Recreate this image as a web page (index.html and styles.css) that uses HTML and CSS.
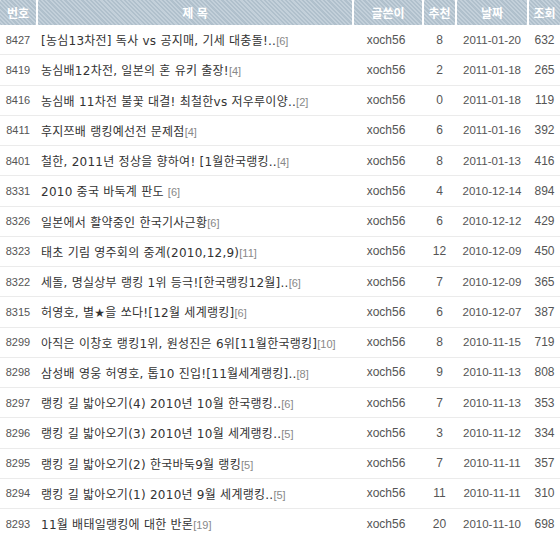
FILE: index.html
```html
<!DOCTYPE html>
<html lang="ko">
<head>
<meta charset="utf-8">
<link rel="stylesheet" href="styles.css">
</head>
<body>
<div class="board">
  <div class="head">
    <div class="hc c-no">번호</div>
    <div class="hc c-title">제 목</div>
    <div class="hc c-author">글쓴이</div>
    <div class="hc c-rec">추천</div>
    <div class="hc c-date">날짜</div>
    <div class="hc c-view">조회</div>
  </div>
  <ul class="rows">
    <li class="row"><span class="c-no">8427</span><span class="c-title">[농심13차전] 독사 vs 공지매, 기세 대충돌!..<em>[6]</em></span><span class="c-author">xoch56</span><span class="c-rec">8</span><span class="c-date">2011-01-20</span><span class="c-view">632</span></li>
    <li class="row"><span class="c-no">8419</span><span class="c-title">농심배12차전, 일본의 혼 유키 출장!<em>[4]</em></span><span class="c-author">xoch56</span><span class="c-rec">2</span><span class="c-date">2011-01-18</span><span class="c-view">265</span></li>
    <li class="row"><span class="c-no">8416</span><span class="c-title">농심배 11차전 불꽃 대결! 최철한vs 저우루이양..<em>[2]</em></span><span class="c-author">xoch56</span><span class="c-rec">0</span><span class="c-date">2011-01-18</span><span class="c-view">119</span></li>
    <li class="row"><span class="c-no">8411</span><span class="c-title">후지쯔배 랭킹예선전 문제점<em>[4]</em></span><span class="c-author">xoch56</span><span class="c-rec">6</span><span class="c-date">2011-01-16</span><span class="c-view">392</span></li>
    <li class="row"><span class="c-no">8401</span><span class="c-title">철한, 2011년 정상을 향하여! [1월한국랭킹..<em>[4]</em></span><span class="c-author">xoch56</span><span class="c-rec">8</span><span class="c-date">2011-01-13</span><span class="c-view">416</span></li>
    <li class="row"><span class="c-no">8331</span><span class="c-title">2010 중국 바둑계 판도 <em>[6]</em></span><span class="c-author">xoch56</span><span class="c-rec">4</span><span class="c-date">2010-12-14</span><span class="c-view">894</span></li>
    <li class="row"><span class="c-no">8326</span><span class="c-title">일본에서 활약중인 한국기사근황<em>[6]</em></span><span class="c-author">xoch56</span><span class="c-rec">6</span><span class="c-date">2010-12-12</span><span class="c-view">429</span></li>
    <li class="row"><span class="c-no">8323</span><span class="c-title">태초 기림 영주회의 중계(2010,12,9)<em>[11]</em></span><span class="c-author">xoch56</span><span class="c-rec">12</span><span class="c-date">2010-12-09</span><span class="c-view">450</span></li>
    <li class="row"><span class="c-no">8322</span><span class="c-title">세돌, 명실상부 랭킹 1위 등극![한국랭킹12월]..<em>[6]</em></span><span class="c-author">xoch56</span><span class="c-rec">7</span><span class="c-date">2010-12-09</span><span class="c-view">365</span></li>
    <li class="row"><span class="c-no">8315</span><span class="c-title">허영호, 별★을 쏘다![12월 세계랭킹]<em>[6]</em></span><span class="c-author">xoch56</span><span class="c-rec">6</span><span class="c-date">2010-12-07</span><span class="c-view">387</span></li>
    <li class="row"><span class="c-no">8299</span><span class="c-title">아직은 이창호 랭킹1위, 원성진은 6위[11월한국랭킹]<em>[10]</em></span><span class="c-author">xoch56</span><span class="c-rec">8</span><span class="c-date">2010-11-15</span><span class="c-view">719</span></li>
    <li class="row"><span class="c-no">8298</span><span class="c-title">삼성배 영웅 허영호, 톱10 진입![11월세계랭킹]..<em>[8]</em></span><span class="c-author">xoch56</span><span class="c-rec">9</span><span class="c-date">2010-11-13</span><span class="c-view">808</span></li>
    <li class="row"><span class="c-no">8297</span><span class="c-title">랭킹 길 밟아오기(4) 2010년 10월 한국랭킹..<em>[6]</em></span><span class="c-author">xoch56</span><span class="c-rec">7</span><span class="c-date">2010-11-13</span><span class="c-view">353</span></li>
    <li class="row"><span class="c-no">8296</span><span class="c-title">랭킹 길 밟아오기(3) 2010년 10월 세계랭킹..<em>[5]</em></span><span class="c-author">xoch56</span><span class="c-rec">3</span><span class="c-date">2010-11-12</span><span class="c-view">334</span></li>
    <li class="row"><span class="c-no">8295</span><span class="c-title">랭킹 길 밟아오기(2) 한국바둑9월 랭킹<em>[5]</em></span><span class="c-author">xoch56</span><span class="c-rec">7</span><span class="c-date">2010-11-11</span><span class="c-view">357</span></li>
    <li class="row"><span class="c-no">8294</span><span class="c-title">랭킹 길 밟아오기(1) 2010년 9월 세계랭킹..<em>[5]</em></span><span class="c-author">xoch56</span><span class="c-rec">11</span><span class="c-date">2010-11-11</span><span class="c-view">310</span></li>
    <li class="row"><span class="c-no">8293</span><span class="c-title">11월 배태일랭킹에 대한 반론<em>[19]</em></span><span class="c-author">xoch56</span><span class="c-rec">20</span><span class="c-date">2010-11-10</span><span class="c-view">698</span></li>
  </ul>
</div>
</body>
</html>
```

FILE: styles.css
```css
html, body {
  margin: 0;
  padding: 0;
  background: #fff;
}
body {
  font-family: "Liberation Sans", "Noto Sans CJK KR", sans-serif;
  overflow: hidden;
}
.board {
  width: 560px;
}
.head {
  display: flex;
  gap: 2px;
  height: 25px;
  background: #fff;
}
.hc {
  display: flex;
  align-items: center;
  justify-content: center;
  background-color: #b3c3cf;
  background-image: repeating-linear-gradient(45deg, #b0c0cc 0 1.5px, #c3d0da 1.5px 3px);
  color: #fff;
  font-family: "Noto Sans CJK KR", sans-serif;
  font-weight: 700;
  font-size: 12px;
  border-radius: 1px;
}
.c-no { width: 36px; flex: none; }
.c-title { width: 314px; flex: none; }
.c-author { width: 68px; flex: none; }
.c-rec { width: 31px; flex: none; }
.c-date { width: 70px; flex: none; }
.c-view { width: 31px; flex: none; }
.rows {
  list-style: none;
  margin: 0;
  padding: 0;
}
.row {
  display: flex;
  gap: 2px;
  align-items: center;
  height: 30.25px;
  box-sizing: border-box;
  border-bottom: 1px solid #ebebeb;
  color: #555;
  font-size: 12px;
}
.row .c-no {
  text-align: center;
  font-size: 11px;
  color: #555;
}
.row .c-title {
  box-sizing: border-box;
  padding-left: 3px;
  font-family: "DejaVu Sans", "Noto Sans CJK KR", sans-serif;
  font-size: 12px;
  letter-spacing: 0.25px;
  color: #333;
  white-space: nowrap;
  overflow: hidden;
}
.row .c-title em {
  font-style: normal;
  font-family: "Liberation Sans", sans-serif;
  font-size: 11px;
  letter-spacing: 0;
  color: #888;
}
.row .c-author,
.row .c-rec,
.row .c-date,
.row .c-view {
  text-align: center;
  color: #555;
}
.row .c-author {
  padding-right: 4px;
  box-sizing: border-box;
}
.row .c-date {
  font-size: 11.5px;
}
```
